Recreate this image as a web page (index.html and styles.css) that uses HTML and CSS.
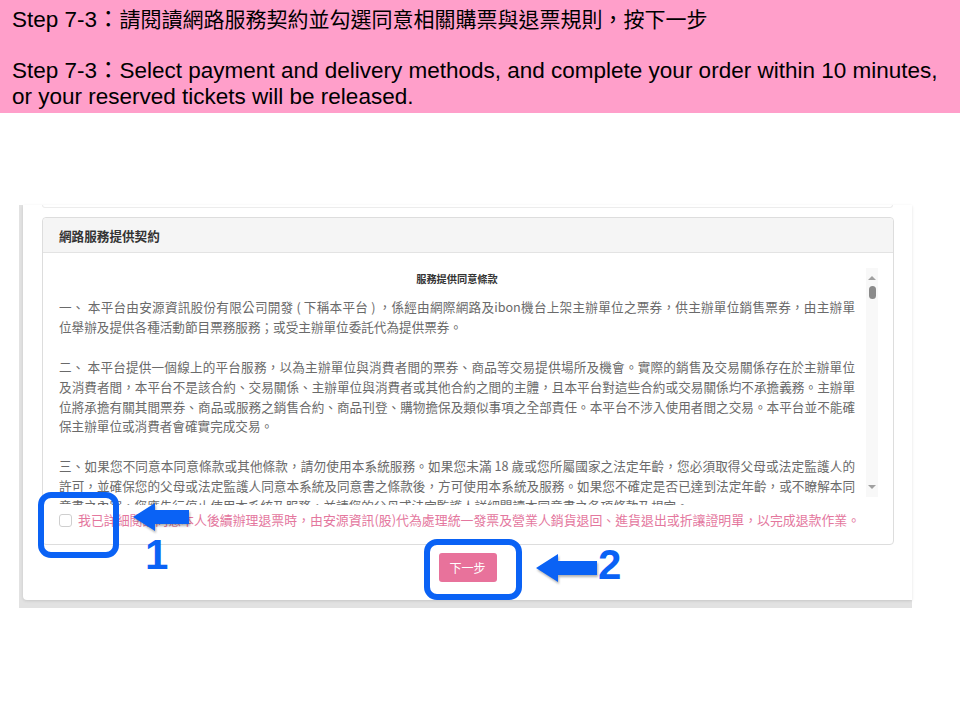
FILE: index.html
```html
<!DOCTYPE html>
<html lang="zh-Hant">
<head>
  <meta charset="UTF-8">
  <meta name="viewport" content="width=device-width, initial-scale=1.0">
  <title>Step 7-3 - 網路服務提供契約</title>
  <link rel="stylesheet" href="styles.css">
</head>
<body>
  <!-- Slide caption -->
  <header class="slide-head">
    <p>Step 7-3：<span class="zh">請閱讀網路服務契約並勾選同意相關購票與退票規則，按下一步</span></p>
    <p class="gap">Step 7-3：Select payment and delivery methods, and complete your order within 10 minutes,<br>or your reserved tickets will be released.</p>
  </header>

  <!-- Screenshot of the ticket page -->
  <main class="shot">
    <div class="shot-inner">
      <div class="prev-card"></div>

      <section class="panel">
        <div class="panel-head">網路服務提供契約</div>
        <div class="panel-body">
          <div class="terms">
            <div class="terms-text">
              <h4>服務提供同意條款</h4>
              <p><span class="first-line">一、 本平台由安源資訊股份有限公司開發 ( 下稱本平台 ) ，係經由網際網路及ibon機台上架主辦單位之票券，供主辦單位銷售票券，由主辦單</span>位舉辦及提供各種活動節目票務服務；或受主辦單位委託代為提供票券。</p>
              <p>二、 本平台提供一個線上的平台服務，以為主辦單位與消費者間的票券、商品等交易提供場所及機會。實際的銷售及交易關係存在於主辦單位及消費者間，本平台不是該合約、交易關係、主辦單位與消費者或其他合約之間的主體，且本平台對這些合約或交易關係均不承擔義務。主辦單位將承擔有關其間票券、商品或服務之銷售合約、商品刊登、購物擔保及類似事項之全部責任。本平台不涉入使用者間之交易。本平台並不能確保主辦單位或消費者會確實完成交易。</p>
              <p>三、如果您不同意本同意條款或其他條款，請勿使用本系統服務。如果您未滿 18 歲或您所屬國家之法定年齡，您必須取得父母或法定監護人的許可，並確保您的父母或法定監護人同意本系統及同意書之條款後，方可使用本系統及服務。如果您不確定是否已達到法定年齡，或不瞭解本同意書之內容，您應先行停止使用本系統及服務，並請您的父母或法定監護人詳細閱讀本同意書之各項條款及規定。</p>
            </div>
            <div class="scrollbar">
              <span class="sb-up"></span>
              <span class="sb-thumb"></span>
              <span class="sb-track"></span>
              <span class="sb-down"></span>
            </div>
          </div>
          <label class="agree">
            <input type="checkbox">
            <span>我已詳細閱讀同意本人後續辦理退票時，由安源資訊(股)代為處理統一發票及營業人銷貨退回、進貨退出或折讓證明單，以完成退款作業。</span>
          </label>
        </div>
      </section>

      <div class="actions">
        <button type="button" class="next-btn">下一步</button>
      </div>
    </div>
  </main>

  <!-- Blue call-outs drawn over the screenshot -->
  <div class="mark mark-1"></div>
  <svg class="arrow arrow-1" width="56" height="30" viewBox="0 0 56 30">
    <polygon points="0,15 22,1 22,8 56,8 56,22 22,22 22,29" fill="#0a62f5"/>
  </svg>
  <div class="step-no step-no-1">1</div>

  <div class="mark mark-2"></div>
  <svg class="arrow arrow-2" width="61" height="30" viewBox="0 0 61 30">
    <polygon points="0,15 22,1 22,8 61,8 61,22 22,22 22,29" fill="#0a62f5"/>
  </svg>
  <div class="step-no step-no-2">2</div>
</body>
</html>
```

FILE: styles.css
```css
* {
    box-sizing: border-box;
}

body {
    margin: 0;
    background: #ffffff;
    font-family: "Noto Sans CJK TC", sans-serif;
}

/* Slide caption */
.slide-head {
    background-color: #ff9fca;
    height: 113px;
    padding: 6px 12px 0;
    font-family: "Liberation Sans", "Noto Sans CJK TC", sans-serif;
    font-size: 22.5px;
    line-height: 25.5px;
    color: #000;
}

.slide-head p {
    margin: 0;
}

.slide-head .gap {
    margin-top: 25.5px;
}

.zh {
    font-family: "Noto Sans CJK TC", sans-serif;
    font-size: 21px;
}

/* Screenshot frame */
.shot {
    margin: 92px 0 0 19px;
    width: 893px;
    background-color: #e2e2e2;
    padding: 0 0 8px 4px;
}

.shot-inner {
    background: #fff;
    border-bottom-left-radius: 4px;
    box-shadow: 0 1px 3px rgba(0, 0, 0, 0.12);
    padding-bottom: 18px;
}

.prev-card {
    margin-left: 19px;
    width: 851px;
    height: 3px;
    border: 1px solid #ececec;
    border-top: none;
    border-radius: 0 0 4px 4px;
}

/* Contract panel */
.panel {
    margin: 9px 0 0 19px;
    width: 852px;
    border: 1px solid #dddddd;
    border-radius: 4px;
    color: #6a6a6a;
}

.panel-head {
    height: 35px;
    padding: 0 16px;
    background-color: #f5f5f5;
    border-bottom: 1px solid #e3e3e3;
    border-radius: 4px 4px 0 0;
    font-size: 12.6px;
    font-weight: bold;
    line-height: 35px;
    color: #333;
}

.panel-body {
    padding: 9px 15px 14px 16px;
}

.terms {
    display: flex;
    gap: 11px;
    height: 243px;
    overflow: hidden;
}

.terms-text {
    width: 796px;
    flex-shrink: 0;
    padding-top: 7px;
    font-size: 12.6px;
    line-height: 19.9px;
    text-align: justify;
}

.terms-text h4 {
    margin: 0 0 8px;
    font-size: 10.2px;
    line-height: 20px;
    text-align: center;
    color: #333;
}

.terms-text p {
    margin: 0 0 19.9px;
}

.terms-text .first-line {
    display: block;
    text-align-last: justify;
}

/* Fake scrollbar of the terms box */
.scrollbar {
    width: 12px;
    height: 229px;
    margin-top: 6px;
    background-color: #f8f8f8;
    display: flex;
    flex-direction: column;
    align-items: center;
    padding: 8px 0 8px;
}

.sb-up,
.sb-down {
    width: 0;
    height: 0;
    border-left: 4px solid transparent;
    border-right: 4px solid transparent;
}

.sb-up {
    border-bottom: 4px solid #a0a0a0;
}

.sb-down {
    border-top: 4px solid #a0a0a0;
}

.sb-thumb {
    margin-top: 6px;
    width: 7px;
    height: 13px;
    border-radius: 4px;
    background-color: #8a8a8a;
}

.sb-track {
    flex: 1;
}

/* Agreement checkbox */
.agree {
    display: flex;
    align-items: center;
    gap: 6px;
    margin-top: 5px;
    font-size: 12.9px;
    line-height: 20px;
    color: #e4779e;
}

.agree input {
    margin: 0;
    width: 13px;
    height: 13px;
    flex-shrink: 0;
    appearance: none;
    border: 1px solid #cfcfcf;
    border-radius: 3px;
    background: #fff;
}

/* Next button */
.actions {
    display: flex;
    justify-content: center;
    padding-top: 8px;
}

.next-btn {
    width: 58px;
    height: 29px;
    border: none;
    border-radius: 3px;
    background-color: #e8729b;
    color: #fff;
    font-family: "Noto Sans CJK TC", sans-serif;
    font-size: 12px;
    padding: 0;
}

/* Call-outs */
.mark {
    position: absolute;
    border: 6px solid #0a62f5;
    border-radius: 13px;
}

.mark-1 {
    left: 38px;
    top: 492px;
    width: 81px;
    height: 66px;
}

.mark-2 {
    left: 424px;
    top: 539px;
    width: 98px;
    height: 61px;
}

.arrow {
    position: absolute;
    filter: drop-shadow(1px 2px 1px rgba(0, 0, 0, 0.3));
}

.arrow-1 {
    left: 133px;
    top: 502px;
}

.arrow-2 {
    left: 536px;
    top: 553px;
}

.step-no {
    position: absolute;
    font-family: "Liberation Sans", Arial, sans-serif;
    font-weight: bold;
    font-size: 42px;
    line-height: 1;
    color: #0a62f5;
}

.step-no-1 {
    left: 145px;
    top: 534px;
}

.step-no-2 {
    left: 598px;
    top: 544px;
}
```
